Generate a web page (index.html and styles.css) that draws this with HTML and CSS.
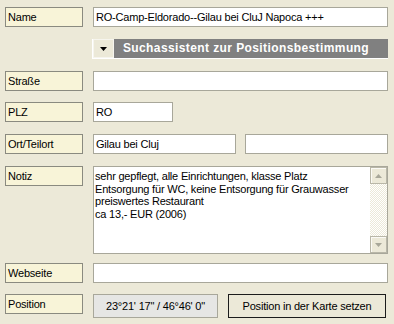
FILE: index.html
```html
<!DOCTYPE html>
<html lang="de">
<head>
    <meta charset="UTF-8">
    <meta name="viewport" content="width=device-width, initial-scale=1.0">
    <title>Stellplatz bearbeiten</title>
    <link rel="stylesheet" href="styles.css">
</head>
<body>
    <div class="form">
        <div class="row">
            <div class="lbl">Name</div>
            <div class="field wide">RO-Camp-Eldorado--Gilau bei CluJ Napoca +++</div>
        </div>

        <div class="row row-search">
            <div class="search">
                <span class="drop">
                    <svg width="7" height="4" viewBox="0 0 7 4"><polygon points="0,0 7,0 3.5,4" fill="#000"/></svg>
                </span>
                <span class="search-title">Suchassistent zur Positionsbestimmung</span>
            </div>
        </div>

        <div class="row">
            <div class="lbl">Straße</div>
            <div class="field wide"></div>
        </div>

        <div class="row row-plz">
            <div class="lbl">PLZ</div>
            <div class="field plz">RO</div>
        </div>

        <div class="row">
            <div class="lbl">Ort/Teilort</div>
            <div class="pair">
                <div class="field half">Gilau bei Cluj</div>
                <div class="field half"></div>
            </div>
        </div>

        <div class="row row-notiz">
            <div class="lbl">Notiz</div>
            <div class="memo">
                <div class="memo-text">sehr gepflegt, alle Einrichtungen, klasse Platz<br>Entsorgung für WC, keine Entsorgung für Grauwasser<br>preiswertes Restaurant<br>ca 13,- EUR (2006)</div>
                <div class="scroll">
                    <span class="sbtn">
                        <svg width="7" height="4" viewBox="0 0 7 4"><polygon points="3.5,0 7,4 0,4" fill="#a8a799"/></svg>
                    </span>
                    <span class="track"></span>
                    <span class="sbtn">
                        <svg width="7" height="4" viewBox="0 0 7 4"><polygon points="0,0 7,0 3.5,4" fill="#a8a799"/></svg>
                    </span>
                </div>
            </div>
        </div>

        <div class="row row-web">
            <div class="lbl">Webseite</div>
            <div class="field wide"></div>
        </div>

        <div class="row row-pos">
            <div class="lbl">Position</div>
            <div class="coords">23°21' 17" / 46°46' 0"</div>
            <button type="button" class="btn">Position in der Karte setzen</button>
        </div>
    </div>
</body>
</html>
```

FILE: styles.css
```css
body {
    margin: 0;
    padding: 0;
    background-color: #ece9d8;
    font-family: "Liberation Sans", Arial, sans-serif;
    font-size: 11px;
    color: #000;
}

.form {
    display: flex;
    flex-direction: column;
    padding: 7px 6px 0 5px;
}

.row {
    display: flex;
    align-items: flex-start;
    gap: 10px;
    margin-top: 12px;
}

.row:first-child {
    margin-top: 0;
}

.row-plz {
    margin-top: 11px;
}

.row-web {
    margin-top: 9px;
}

.row-pos {
    margin-top: 11px;
}

.lbl {
    box-sizing: border-box;
    width: 78px;
    height: 20px;
    flex: none;
    padding: 0 2px;
    line-height: 18px;
    background-color: #f8f4d8;
    border: 1px solid #8a8a80;
    letter-spacing: -0.2px;
}

.field {
    box-sizing: border-box;
    height: 20px;
    padding: 0 2px;
    line-height: 18px;
    background-color: #fff;
    border: 1px solid #a8a79a;
    letter-spacing: -0.2px;
    white-space: nowrap;
    overflow: hidden;
}

.wide {
    width: 295px;
}

.plz {
    width: 80px;
}

.pair {
    display: flex;
    gap: 9px;
}

.half {
    width: 143px;
}

/* search assistant bar */
.row-search {
    padding-left: 87px;
}

.search {
    box-sizing: border-box;
    display: flex;
    width: 296px;
    height: 20px;
    border-left: 1px solid #fff;
    border-bottom: 1px solid #fff;
    background-color: #808080;
}

.drop {
    box-sizing: border-box;
    width: 21px;
    height: 19px;
    display: flex;
    align-items: center;
    justify-content: center;
    background-color: #ece9d8;
    border: 1px solid #f6f5ee;
}

.search-title {
    flex: 1;
    text-align: center;
    color: #fff;
    font-size: 12px;
    font-weight: bold;
    letter-spacing: 0.4px;
    line-height: 19px;
    padding-right: 10px;
}

/* memo field */
.memo {
    box-sizing: border-box;
    display: flex;
    width: 295px;
    height: 88px;
    background-color: #fff;
    border: 1px solid #a8a79a;
}

.memo-text {
    flex: 1;
    padding: 3px 1px 0 1px;
    line-height: 12.7px;
    letter-spacing: -0.2px;
}

.scroll {
    display: flex;
    flex-direction: column;
    width: 17px;
}

.sbtn {
    box-sizing: border-box;
    height: 17px;
    display: flex;
    align-items: center;
    justify-content: center;
    background-color: #ece9d8;
    border: 1px solid #b9b7a8;
    box-shadow: inset 1px 1px 0 #fbfaf5;
}

.track {
    flex: 1;
    background: repeating-conic-gradient(#ece9d8 0 25%, #fff 0 50%) 0 0 / 2px 2px;
}

/* position row */
.coords {
    box-sizing: border-box;
    width: 125px;
    height: 24px;
    line-height: 22px;
    text-align: center;
    background-color: #e6e6e4;
    border: 1px solid #a8a79a;
    letter-spacing: -0.2px;
}

.btn {
    box-sizing: border-box;
    width: 158px;
    height: 24px;
    margin: 0;
    padding: 0;
    font-family: "Liberation Sans", Arial, sans-serif;
    font-size: 11px;
    letter-spacing: -0.2px;
    color: #000;
    background-color: #ece9d8;
    border: 1px solid #1c1c1c;
    cursor: pointer;
}
```
